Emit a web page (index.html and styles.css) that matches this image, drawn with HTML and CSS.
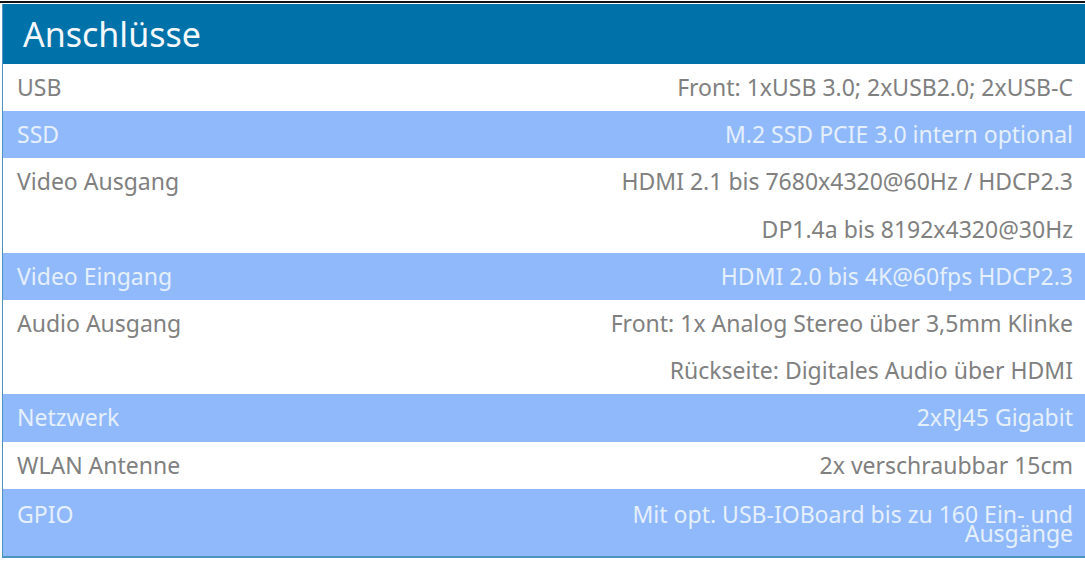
FILE: index.html
```html
<!DOCTYPE html>
<html>
<head>
	<title>Anschlüsse</title>
	<link rel="stylesheet" href="styles.css">
</head>
<body>
	<div class="top-line"></div>
	<div class="spec">
		<h2 class="spec-title">Anschlüsse</h2>
		<div class="row">
			<div class="label">USB</div>
			<div class="value">Front: 1xUSB 3.0; 2xUSB2.0; 2xUSB-C</div>
		</div>
		<div class="row alt">
			<div class="label">SSD</div>
			<div class="value">M.2 SSD PCIE 3.0 intern optional</div>
		</div>
		<div class="row">
			<div class="label">Video Ausgang</div>
			<div class="value">HDMI 2.1 bis 7680x4320@60Hz / HDCP2.3</div>
		</div>
		<div class="row">
			<div class="label"></div>
			<div class="value">DP1.4a bis 8192x4320@30Hz</div>
		</div>
		<div class="row alt">
			<div class="label">Video Eingang</div>
			<div class="value">HDMI 2.0 bis 4K@60fps HDCP2.3</div>
		</div>
		<div class="row">
			<div class="label">Audio Ausgang</div>
			<div class="value">Front: 1x Analog Stereo über 3,5mm Klinke</div>
		</div>
		<div class="row">
			<div class="label"></div>
			<div class="value">Rückseite: Digitales Audio über HDMI</div>
		</div>
		<div class="row alt">
			<div class="label">Netzwerk</div>
			<div class="value">2xRJ45 Gigabit</div>
		</div>
		<div class="row">
			<div class="label">WLAN Antenne</div>
			<div class="value">2x verschraubbar 15cm</div>
		</div>
		<div class="row alt gpio">
			<div class="label">GPIO</div>
			<div class="value">Mit opt. USB-IOBoard bis zu 160 Ein- und Ausgänge</div>
		</div>
	</div>
</body>
</html>
```

FILE: styles.css
```css
* {
	margin: 0;
	padding: 0;
	box-sizing: border-box;
}

body {
	background-color: #ffffff;
	font-family: 'Noto Sans', 'Open Sans', sans-serif;
	color: #808080;
}

.top-line {
	height: 2px;
	margin-top: 1px;
	background-color: #111111;
}

.spec {
	margin-left: 2px;
	border-left: 1px solid #4d93c2;
	border-bottom: 2px solid #4d93c2;
}

.spec-title {
	margin-top: 1px;
	height: 60px;
	padding-left: 20px;
	background-color: #0072aa;
	color: #f4f8fb;
	font-size: 34px;
	font-weight: 400;
	line-height: 60px;
}

.row {
	display: grid;
	grid-template-columns: 1fr 478px;
	padding: 14px 12px 14px 14px;
	font-size: 23px;
	line-height: 19.2px;
	background-color: #ffffff;
}

.row.alt {
	background-color: #8fb9fa;
	color: #e6effc;
}

.row.gpio {
	padding-top: 16px;
	padding-bottom: 13px;
}

.value {
	text-align: right;
}
```
